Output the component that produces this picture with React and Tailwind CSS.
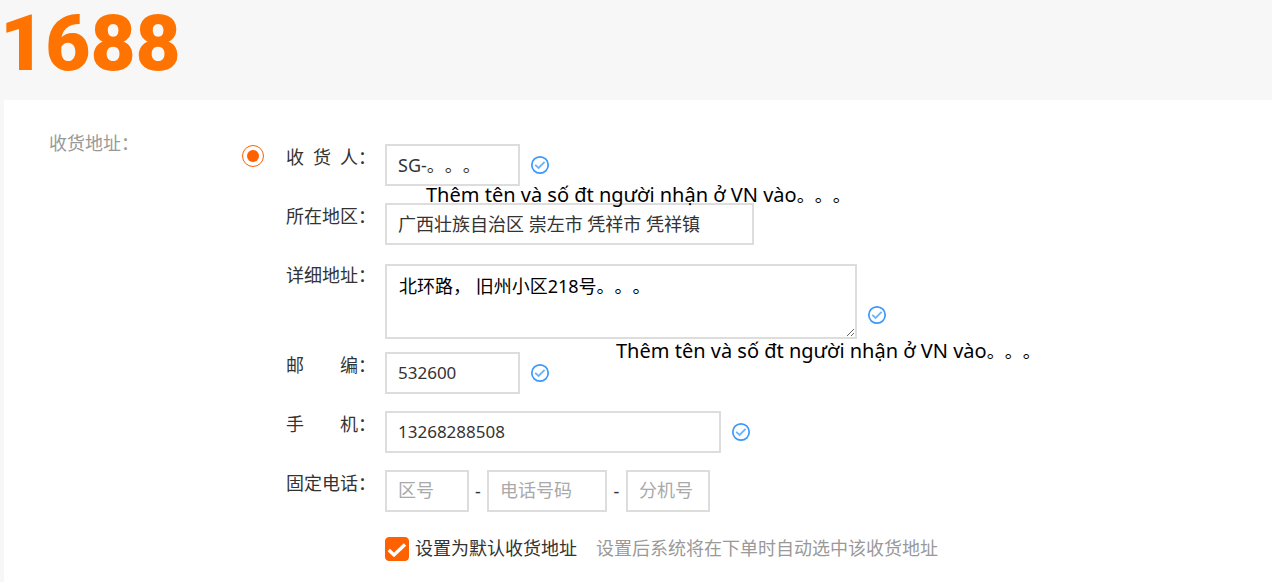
import React, { useState } from "react";

const fieldClass =
    "h-[42px] border-2 border-[#dddddd] bg-white px-[11px] pb-[2px] text-[#333333] placeholder-[#a9a9a9] outline-none";

const ValidIcon = ({ className = "" }) => (
    <svg
        className={`ml-[10px] size-5 shrink-0 ${className}`}
        viewBox="0 0 20 20"
        fill="none"
        aria-hidden="true"
    >
        <circle cx="10" cy="10" r="8.2" stroke="#3b98fc" strokeWidth="1.7" />
        <path d="M5.2 9.8l3.4 3.2 6-6.2" stroke="#6cb2fd" strokeWidth="1.8" />
    </svg>
);

const Row = ({ id, label, className = "", children }) => (
    <div className={`flex items-start ${className}`}>
        <label htmlFor={id} className="flex w-[99px] shrink-0 leading-[26px]">
            <span className="w-[72px] whitespace-nowrap [text-align-last:justify]">
                {label}
            </span>
            <span>：</span>
        </label>
        {children}
    </div>
);

const Note = ({ className }) => (
    <p
        className={`pointer-events-none absolute top-full z-10 whitespace-nowrap text-[20px] text-black ${className}`}
    >
        Thêm tên và số đt người nhận ở VN vào
        <span className="text-[18px]">。。。</span>
    </p>
);

const AddressForm = () => {
    const [isDefault, setIsDefault] = useState(true);

    return (
        <div className="flex min-w-0 flex-1 flex-col gap-[17px]">
            <Row id="receiver" label="收 货 人">
                <div className="relative flex items-center">
                    <input
                        id="receiver"
                        className={`${fieldClass} w-[135px] text-[18px]`}
                        defaultValue="SG-。。。"
                    />
                    <ValidIcon />
                    <Note className="left-[41px] leading-[18px]" />
                </div>
            </Row>

            <Row id="region" label="所在地区">
                <input
                    id="region"
                    className={`${fieldClass} w-[369px]`}
                    defaultValue="广西壮族自治区 崇左市 凭祥市 凭祥镇"
                />
            </Row>

            <Row id="street" label="详细地址" className="-mb-1">
                <div className="relative mt-[2px] flex items-end">
                    <textarea
                        id="street"
                        className="h-[75px] w-[472px] resize border-2 border-[#dddddd] bg-white px-3 py-[7px] leading-[26px] text-black outline-none"
                        defaultValue="北环路， 旧州小区218号。。。"
                    />
                    <ValidIcon className="mb-[14px]" />
                    <Note className="left-[231px] leading-6" />
                </div>
            </Row>

            <Row id="zip" label="邮 编">
                <div className="flex items-center">
                    <input
                        id="zip"
                        className={`${fieldClass} w-[135px] text-[17px]`}
                        defaultValue="532600"
                    />
                    <ValidIcon />
                </div>
            </Row>

            <Row id="mobile" label="手 机">
                <div className="flex items-center">
                    <input
                        id="mobile"
                        className={`${fieldClass} w-[336px] text-[17px]`}
                        defaultValue="13268288508"
                    />
                    <ValidIcon />
                </div>
            </Row>

            <Row id="area-code" label="固定电话">
                <div className="flex items-center">
                    <input
                        id="area-code"
                        className={`${fieldClass} w-[84px]`}
                        placeholder="区号"
                    />
                    <span className="w-[18px] text-center">-</span>
                    <input
                        aria-label="电话号码"
                        className={`${fieldClass} w-[120px]`}
                        placeholder="电话号码"
                    />
                    <span className="w-[19px] text-center">-</span>
                    <input
                        aria-label="分机号"
                        className={`${fieldClass} w-[84px]`}
                        placeholder="分机号"
                    />
                </div>
            </Row>

            <div className="ml-[99px] mt-2 flex items-start leading-[22px]">
                <label className="flex items-start gap-[6px]">
                    <span className="relative size-6">
                        <input
                            type="checkbox"
                            className="block size-6 appearance-none rounded-[4px] border border-[#ff6000] checked:bg-[#ff6000]"
                            checked={isDefault}
                            onChange={(e) => setIsDefault(e.target.checked)}
                        />
                        {isDefault && (
                            <svg
                                className="pointer-events-none absolute inset-0"
                                viewBox="0 0 24 24"
                                fill="none"
                                aria-hidden="true"
                            >
                                <path
                                    d="M3.8 13l5.2 5L20 7.6"
                                    stroke="white"
                                    strokeWidth="3.4"
                                />
                            </svg>
                        )}
                    </span>
                    设置为默认收货地址
                </label>
                <span className="ml-[19px] text-[#999999]">
                    设置后系统将在下单时自动选中该收货地址
                </span>
            </div>
        </div>
    );
};

const App = () => (
    <div className="flex min-h-screen flex-col bg-[#f7f7f7] pl-1 font-['Noto_Sans','Noto_Sans_CJK_SC',sans-serif] text-[18px] text-[#333333] [text-spacing-trim:space-all]">
        <header className="flex h-[100px] items-start">
            <h1 className="-ml-1 font-['Roboto',sans-serif] text-[78px] font-black leading-[88px] text-[#ff7300]">
                1688
            </h1>
        </header>
        <main className="flex flex-1 items-start bg-white pl-[45px] pt-[30px] pb-5">
            <h2 className="w-[193px] shrink-0 leading-[26px] text-[#999999]">
                收货地址：
            </h2>
            <div className="flex flex-1 pt-[14px]">
                <input
                    type="radio"
                    name="address"
                    aria-label="收货地址"
                    defaultChecked
                    className="mt-[1px] mr-[22px] grid size-[22px] shrink-0 appearance-none place-content-center rounded-full border border-[#ff6000] before:size-3 before:rounded-full checked:before:bg-[#ff6000]"
                />
                <AddressForm />
            </div>
        </main>
    </div>
);

export default App;
